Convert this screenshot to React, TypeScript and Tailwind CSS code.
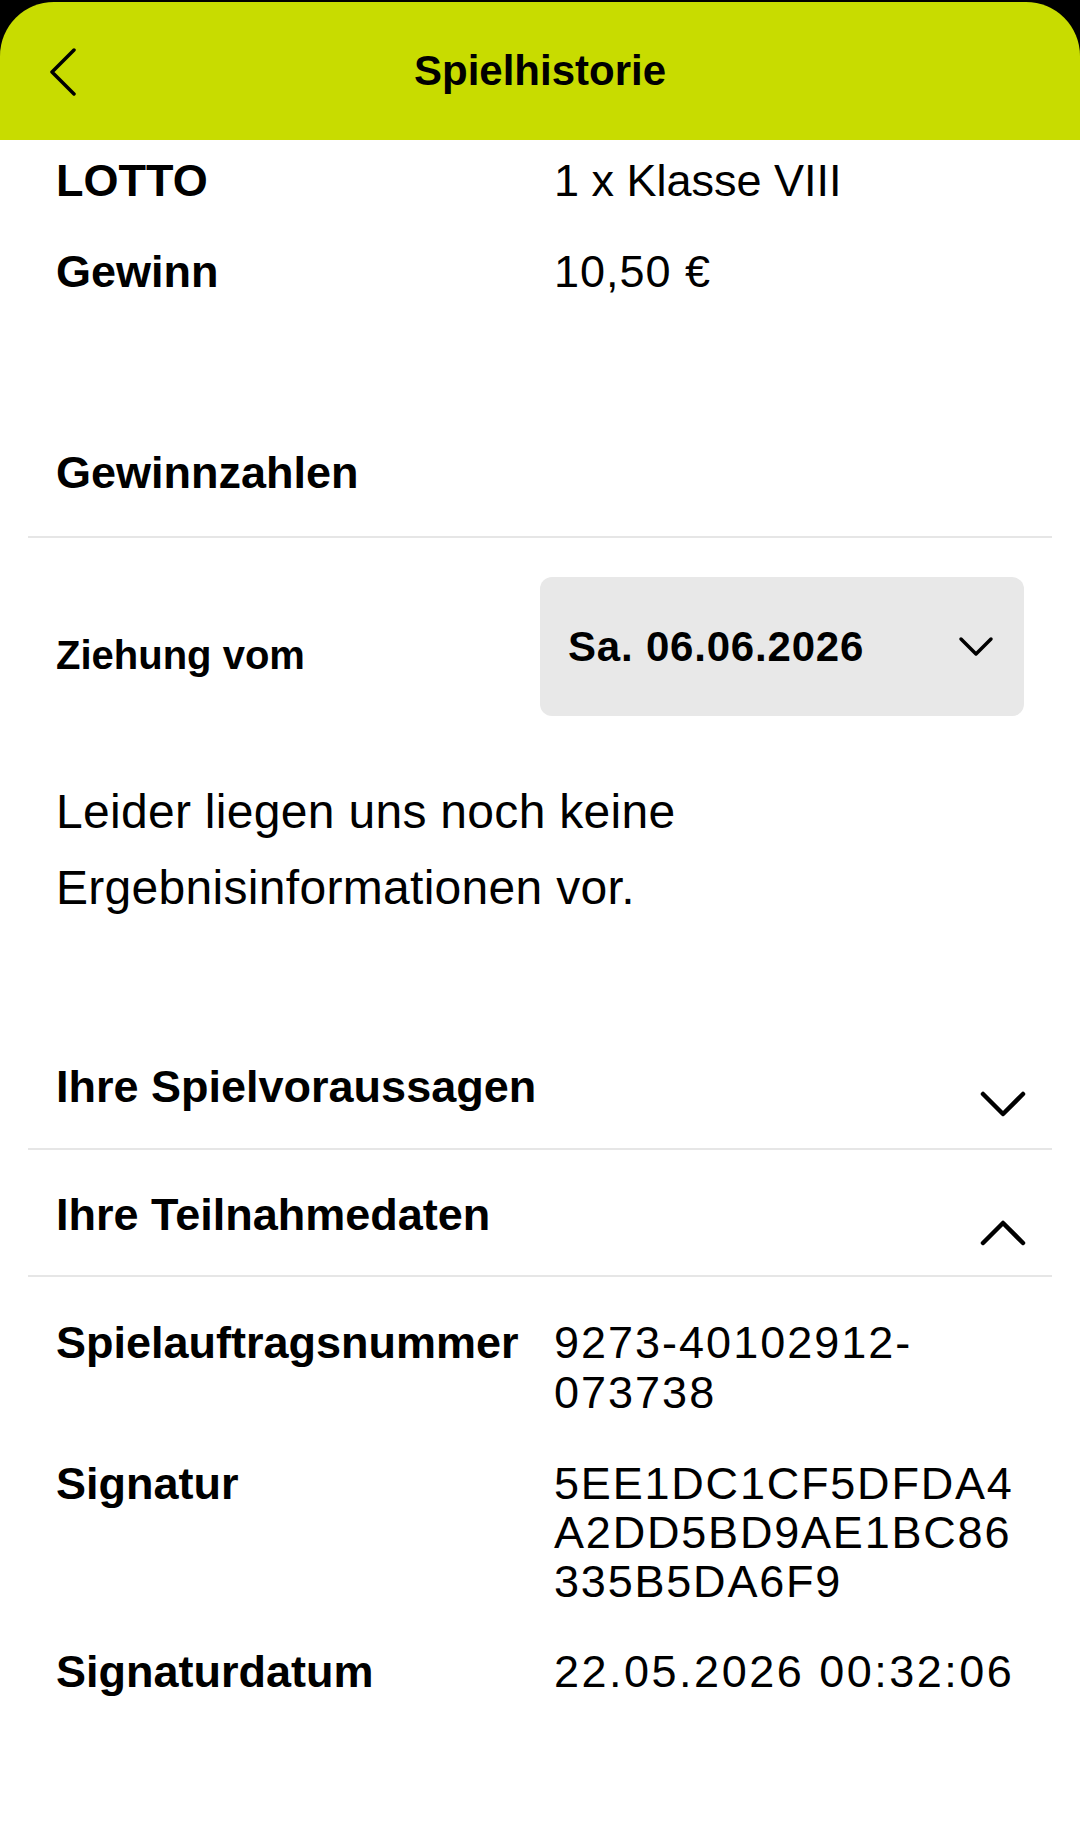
import React from 'react'

const font = { fontFamily: '"Liberation Sans", Arial, sans-serif' }

const Chevron = ({ up = false }: { up?: boolean }) => (
  <svg width="46" height="28" viewBox="0 0 46 28" fill="none" className="shrink-0">
    <polyline
      points={up ? '3,25 23,5 43,25' : '3,3 23,23 43,3'}
      stroke="#000"
      strokeWidth="4.5"
      strokeLinecap="round"
      strokeLinejoin="round"
    />
  </svg>
)

const Row = ({ label, children, valueClass = '' }: { label: string; children: React.ReactNode; valueClass?: string }) => (
  <div className="grid grid-cols-[498px_1fr] text-[45px] leading-[50px]">
    <div className="font-bold">{label}</div>
    <div className={valueClass}>{children}</div>
  </div>
)

const Divider = () => <div className="mx-7 h-[2px] bg-[#e6e6e6]" />

export default function App() {
  return (
    <div className="flex min-h-[1839px] w-[1080px] flex-col bg-black pt-[2px] text-black" style={font}>
      {/* Header */}
      <header className="relative flex h-[138px] shrink-0 items-center justify-center rounded-t-[54px] bg-[#c8dc00]">
        <button className="absolute left-[48px] top-[44px]">
          <svg width="30" height="50" viewBox="0 0 30 50" fill="none">
            <polyline
              points="26,4 4,26 26,48"
              stroke="#000"
              strokeWidth="3.5"
              strokeLinecap="round"
              strokeLinejoin="round"
            />
          </svg>
        </button>
        <h1 className="-mt-[2px] text-[42px] font-bold">Spielhistorie</h1>
      </header>

      <main className="flex-1 bg-white pb-[140px]">
        {/* Summary */}
        <div className="flex flex-col gap-[41px] px-14 pt-[16px]">
          <Row label="LOTTO">1 x Klasse VIII</Row>
          <Row label="Gewinn" valueClass="tracking-[1px]">10,50 €</Row>
        </div>

        <h2 className="px-14 pt-[151px] pb-[38px] text-[45px] font-bold leading-[50px]">Gewinnzahlen</h2>
        <Divider />

        {/* Drawing selector */}
        <div className="mt-[39px] flex items-center justify-between px-14">
          <span className="mt-[16px] text-[40px] font-bold">Ziehung vom</span>
          <button className="flex h-[139px] w-[484px] items-center justify-between rounded-[12px] bg-[#e8e8e8] pl-[28px] pr-[30px]">
            <span className="text-[42px] font-bold tracking-[0.8px]">Sa. 06.06.2026</span>
            <svg width="36" height="22" viewBox="0 0 36 22" fill="none">
              <polyline
                points="3,3 18,18 33,3"
                stroke="#000"
                strokeWidth="3.5"
                strokeLinecap="round"
                strokeLinejoin="round"
              />
            </svg>
          </button>
        </div>

        <p className="mt-[58px] px-14 text-[48px] leading-[76px] tracking-[0.3px]">
          Leider liegen uns noch keine
          <br />
          Ergebnisinformationen vor.
        </p>

        {/* Accordions */}
        <div className="mt-[136px] flex items-start justify-between px-14 pb-[29px]">
          <span className="text-[45px] font-bold leading-[50px]">Ihre Spielvoraussagen</span>
          <div className="mt-[29px] -mr-[2px]">
            <Chevron />
          </div>
        </div>
        <Divider />
        <div className="flex items-start justify-between px-14 pt-[40px] pb-[29px]">
          <span className="text-[45px] font-bold leading-[50px]">Ihre Teilnahmedaten</span>
          <div className="mt-[28px] -mr-[2px]">
            <Chevron up />
          </div>
        </div>
        <Divider />

        {/* Participation data */}
        <div className="flex flex-col gap-[41px] px-14 pt-[41px]">
          <Row label="Spielauftragsnummer" valueClass="tracking-[2px]">
            9273-40102912-
            <br />
            073738
          </Row>
          <div className="grid grid-cols-[498px_1fr] text-[45px]">
            <div className="font-bold leading-[50px]">Signatur</div>
            <div className="leading-[49px] tracking-[1.8px]">
              5EE1DC1CF5DFDA4
              <br />
              A2DD5BD9AE1BC86
              <br />
              335B5DA6F9
            </div>
          </div>
          <Row label="Signaturdatum" valueClass="tracking-[2.5px]">22.05.2026 00:32:06</Row>
        </div>
      </main>
    </div>
  )
}
